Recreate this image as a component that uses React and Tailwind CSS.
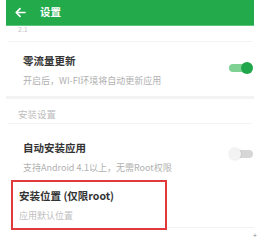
import React from 'react'

function Toggle({ on }) {
    return on ? (
        <div className="relative w-[24px] h-[12px] -mt-[4px] flex items-center">
            <div className="w-[20px] h-[8px] rounded-full bg-[#7fd093]" />
            <div className="absolute right-0 w-[12px] h-[12px] rounded-full bg-[#1fa64a]" />
        </div>
    ) : (
        <div className="relative w-[24px] h-[12px] -mt-[6px] flex items-center">
            <div className="ml-[5px] w-[19px] h-[8px] rounded-full bg-[#d6d6d6]" />
            <div className="absolute left-0 w-[12px] h-[12px] rounded-full bg-[#f3f3f3] shadow-[0_0_2px_rgba(0,0,0,0.15)]" />
        </div>
    )
}

function SettingRow({ title, sub, toggle }) {
    return (
        <div className="flex items-center justify-between pl-[11px] pr-px">
            <div className="flex flex-col gap-[7px] px-[6px]">
                <div className="text-[10.5px] leading-[14px] font-bold text-[#333]">{title}</div>
                <div className="text-[9px] leading-[11px] text-[#b0b0b0]">{sub}</div>
            </div>
            {toggle}
        </div>
    )
}

function App() {
    return (
        <div
            className="w-[259px] h-[251px] bg-white overflow-hidden relative"
            style={{ fontFamily: '"Noto Sans CJK SC", "Noto Sans", sans-serif' }}
        >
            {/* Top Bar */}
            <div className="mx-[6px] w-[248px] h-[26px] bg-[#22aa4b] border-b border-[#5cc47a] flex items-center gap-[14px] px-[9px]">
                <svg width="11" height="11" viewBox="0 0 12 12" fill="none" stroke="white" strokeWidth="1.8" strokeLinecap="round" strokeLinejoin="round">
                    <path d="M11 6H1.5M5.5 1.8L1.3 6l4.2 4.2" />
                </svg>
                <span className="text-white text-[10.5px] font-bold leading-none">设置</span>
            </div>

            <div className="mx-[6px] w-[248px] flex flex-col">
                <div className="h-[16px] flex items-start pl-[12px] text-[7px] leading-[8px] text-[#c4c4c4] -mt-[1px]">2.1</div>

                <div className="mx-[2px] h-px bg-[#f2f2f2]" />

                <div className="mt-[12px]">
                    <SettingRow title="零流量更新" sub="开启后，WI-FI环境将自动更新应用" toggle={<Toggle on />} />
                </div>

                <div className="mt-[10px] h-[3px] bg-[#f3f3f3]" />

                <div className="h-[24px] flex items-center pl-[12px] pt-[6px] text-[9.5px] text-[#bdbdbd]">安装设置</div>

                <div className="mx-[2px] h-px bg-[#f4f4f4]" />

                <div className="mt-[17px]">
                    <SettingRow title="自动安装应用" sub="支持Android 4.1以上，无需Root权限" toggle={<Toggle />} />
                </div>

                <div className="mt-[7px] flex items-end">
                    <div className="w-[156px] h-[50px] ml-[5px] border-2 border-[#e0393e] flex flex-col justify-center gap-[7px] px-[6px]">
                        <div className="text-[10.5px] leading-[14px] font-bold text-[#333]">安装位置 (仅限root)</div>
                        <div className="text-[9px] leading-[11px] text-[#c0c0c0]">应用默认位置</div>
                    </div>
                    <div className="flex-1 h-px bg-[#f2f2f2] mb-[2px]" />
                </div>
            </div>

            <div className="absolute left-[253px] top-[232px] text-[7px] leading-none text-[#888]">+</div>
        </div>
    )
}

export default App
